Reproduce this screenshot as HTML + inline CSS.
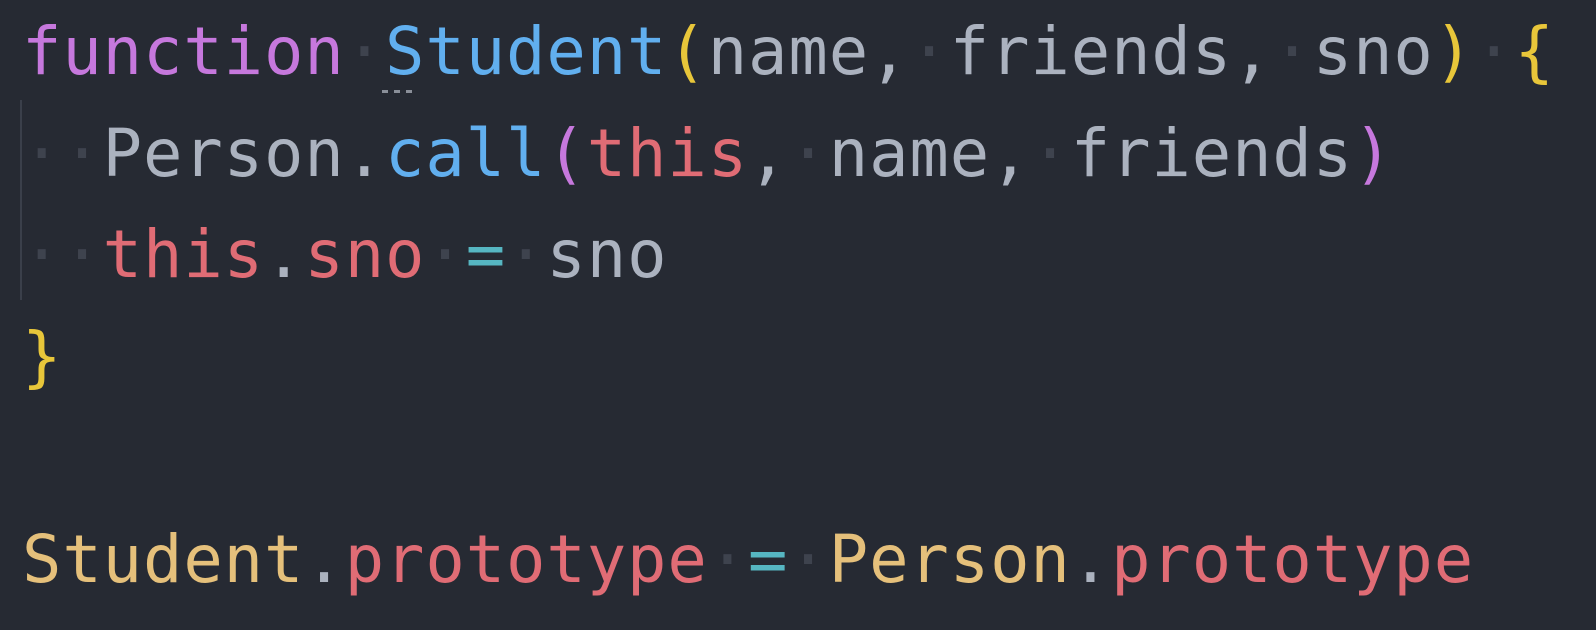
<!DOCTYPE html>
<html><head><meta charset="utf-8"><style>
html,body{margin:0;padding:0;background:#262a33;width:1596px;height:630px;overflow:hidden}
pre{margin:0;padding:2px 0 0 22px;font-family:"DejaVu Sans Mono",monospace;font-size:65.5px;letter-spacing:0.9px;line-height:101.6px;color:#abb2bf;position:relative}
.k{color:#c678dd}.f{color:#61afef}.r{color:#e06c75}.y{color:#e5c07b}.b{color:#e8c63a}.c{color:#56b6c2}.pp{color:#c678dd}
.d{color:#3e434e}
.g{position:absolute;left:20px;top:100px;width:2px;height:200px;background:#3a3f4a}
.e{position:absolute;left:382px;top:90px;width:36px;height:3px;background:repeating-linear-gradient(90deg,#8a8f99 0 6px,transparent 6px 12px)}
</style></head><body>
<pre><div class="g"></div><div class="e"></div><span class="k">function</span><span class="d">·</span><span class="f">Student</span><span class="b">(</span>name,<span class="d">·</span>friends,<span class="d">·</span>sno<span class="b">)</span><span class="d">·</span><span class="b">{</span>
<span class="d">··</span>Person.<span class="f">call</span><span class="pp">(</span><span class="r">this</span>,<span class="d">·</span>name,<span class="d">·</span>friends<span class="pp">)</span>
<span class="d">··</span><span class="r">this</span>.<span class="r">sno</span><span class="d">·</span><span class="c">=</span><span class="d">·</span>sno
<span class="b">}</span>

<span class="y">Student</span>.<span class="r">prototype</span><span class="d">·</span><span class="c">=</span><span class="d">·</span><span class="y">Person</span>.<span class="r">prototype</span></pre>
</body></html>
